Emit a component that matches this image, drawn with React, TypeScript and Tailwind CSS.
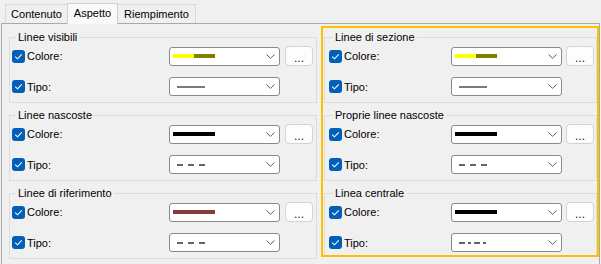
import React from "react";

const font = { fontFamily: '"Liberation Sans", Arial, sans-serif' };

function Check() {
  return (
    <div className="w-[13px] h-[13px] rounded-[3px] bg-[#005fb8] flex items-center justify-center shrink-0">
      <svg width="9" height="7" viewBox="0 0 9 7">
        <path d="M1.2 3.6 L3.5 5.8 L7.8 1.3" stroke="#ffffff" strokeWidth="1.1" fill="none" />
      </svg>
    </div>
  );
}

function Chevron() {
  return (
    <svg width="9" height="5" viewBox="0 0 9 5" className="shrink-0">
      <path d="M0.5 0.5 L4.5 4.3 L8.5 0.5" stroke="#5c5c5c" strokeWidth="1" fill="none" />
    </svg>
  );
}

type Kind = "solid" | "dash" | "dashdot";

function LineType({ kind }: { kind: Kind }) {
  if (kind === "solid") {
    return (
      <svg width="30" height="4" viewBox="0 0 30 4">
        <line x1="0" y1="2" x2="28" y2="2" stroke="#5a5a5a" strokeWidth="1.6" />
      </svg>
    );
  }
  if (kind === "dash") {
    return (
      <svg width="30" height="4" viewBox="0 0 30 4">
        <line x1="0" y1="2" x2="30" y2="2" stroke="#333333" strokeWidth="1.6" strokeDasharray="6 5" />
      </svg>
    );
  }
  return (
    <svg width="30" height="4" viewBox="0 0 30 4">
      <line x1="0" y1="2" x2="28" y2="2" stroke="#333333" strokeWidth="1.6" strokeDasharray="6 3 3 3" />
    </svg>
  );
}

function Combo({ children }: { children: React.ReactNode }) {
  return (
    <div className="w-[111px] h-[19px] bg-white border border-[#8a8a8a] rounded-[3px] flex items-center pl-[3px] pr-[4px] shrink-0">
      <div className="flex-1 flex items-center">{children}</div>
      <Chevron />
    </div>
  );
}

function Dots() {
  return (
    <div className="w-[28px] h-[20px] bg-[#fdfdfd] border border-[#d3d3d3] rounded-[4px] flex items-center justify-center shrink-0 text-[12px] leading-[12px] text-[#1a1a1a] pt-[3px]">
      ...
    </div>
  );
}

function Swatch({ colors }: { colors: string[] }) {
  return (
    <div className="flex h-[4px] w-[42px]">
      {colors.map((c, i) => (
        <div key={i} className="h-full flex-1" style={{ backgroundColor: c }} />
      ))}
    </div>
  );
}

function Group({
  title,
  swatch,
  kind,
  labelW,
  right,
}: {
  title: string;
  swatch: string[];
  kind: Kind;
  labelW: string;
  right?: boolean;
}) {
  return (
    <fieldset
      className={
        "border border-[#dcdcdc] pt-[1px] pb-[6px] " + (right ? "pl-[4px] pr-[1px]" : "pl-[2px] pr-[3px]")
      }
    >
      <legend className="ml-[4px] px-[2px] text-[11px] leading-[16px] text-[#000]">{title}</legend>
      <div className="flex items-center h-[20px]">
        <div className={"flex items-center gap-[2px] shrink-0 " + labelW}>
          <Check />
          <span className="text-[11px] leading-[16px] text-[#000]">Colore:</span>
        </div>
        <Combo>
          <Swatch colors={swatch} />
        </Combo>
        <div className={right ? "ml-[4px]" : "ml-[5px]"}>
          <Dots />
        </div>
      </div>
      <div className="flex items-center h-[19px] mt-[11px]">
        <div className={"flex items-center gap-[2px] shrink-0 " + labelW}>
          <Check />
          <span className="text-[11px] leading-[16px] text-[#000]">Tipo:</span>
        </div>
        <Combo>
          <div className="pl-[4px] flex items-center">
            <LineType kind={kind} />
          </div>
        </Combo>
      </div>
    </fieldset>
  );
}

export default function App() {
  return (
    <div className="w-[601px] h-[264px] bg-[#f0f0f0] overflow-hidden" style={font}>
      <div className="flex items-end h-[23px] pl-[5px]">
        <div className="w-[62px] h-[19px] border-t border-l border-[#d9d9d9] flex items-center justify-center text-[11px] text-[#000]">
          Contenuto
        </div>
        <div className="relative z-10 w-[51px] h-[21px] -mb-px border-t border-l border-r border-[#d0d0d0] bg-[#f9f9f9] flex items-center justify-center text-[11px] text-[#000] pb-[1px]">
          Aspetto
        </div>
        <div className="w-[78px] h-[19px] border-t border-r border-[#d9d9d9] flex items-center justify-center text-[11px] text-[#000]">
          Riempimento
        </div>
      </div>
      <div className="ml-[1px] w-[599px] h-[241px] border-t border-l border-r border-[#a9a9a9] flex items-start">
        <div className="pl-[7px] pt-[5px] w-[315px] flex flex-col gap-[4px] shrink-0">
          <Group title="Linee visibili" swatch={["#ffff00", "#808000"]} kind="solid" labelW="w-[157px]" />
          <Group title="Linee nascoste" swatch={["#000000"]} kind="dash" labelW="w-[157px]" />
          <Group title="Linee di riferimento" swatch={["#853b3b"]} kind="dash" labelW="w-[157px]" />
        </div>
        <div className="ml-[4px] mt-[2px] w-[278px] h-[231px] border-2 border-[#ffc000] overflow-hidden pl-[1px] pt-[1px] shrink-0">
          <div className="w-[273px] flex flex-col gap-[4px]">
            <Group title="Linee di sezione" swatch={["#ffff00", "#808000"]} kind="solid" labelW="w-[122px]" right />
            <Group title="Proprie linee nascoste" swatch={["#000000"]} kind="dash" labelW="w-[122px]" right />
            <Group title="Linea centrale" swatch={["#000000"]} kind="dashdot" labelW="w-[122px]" right />
          </div>
        </div>
      </div>
    </div>
  );
}
